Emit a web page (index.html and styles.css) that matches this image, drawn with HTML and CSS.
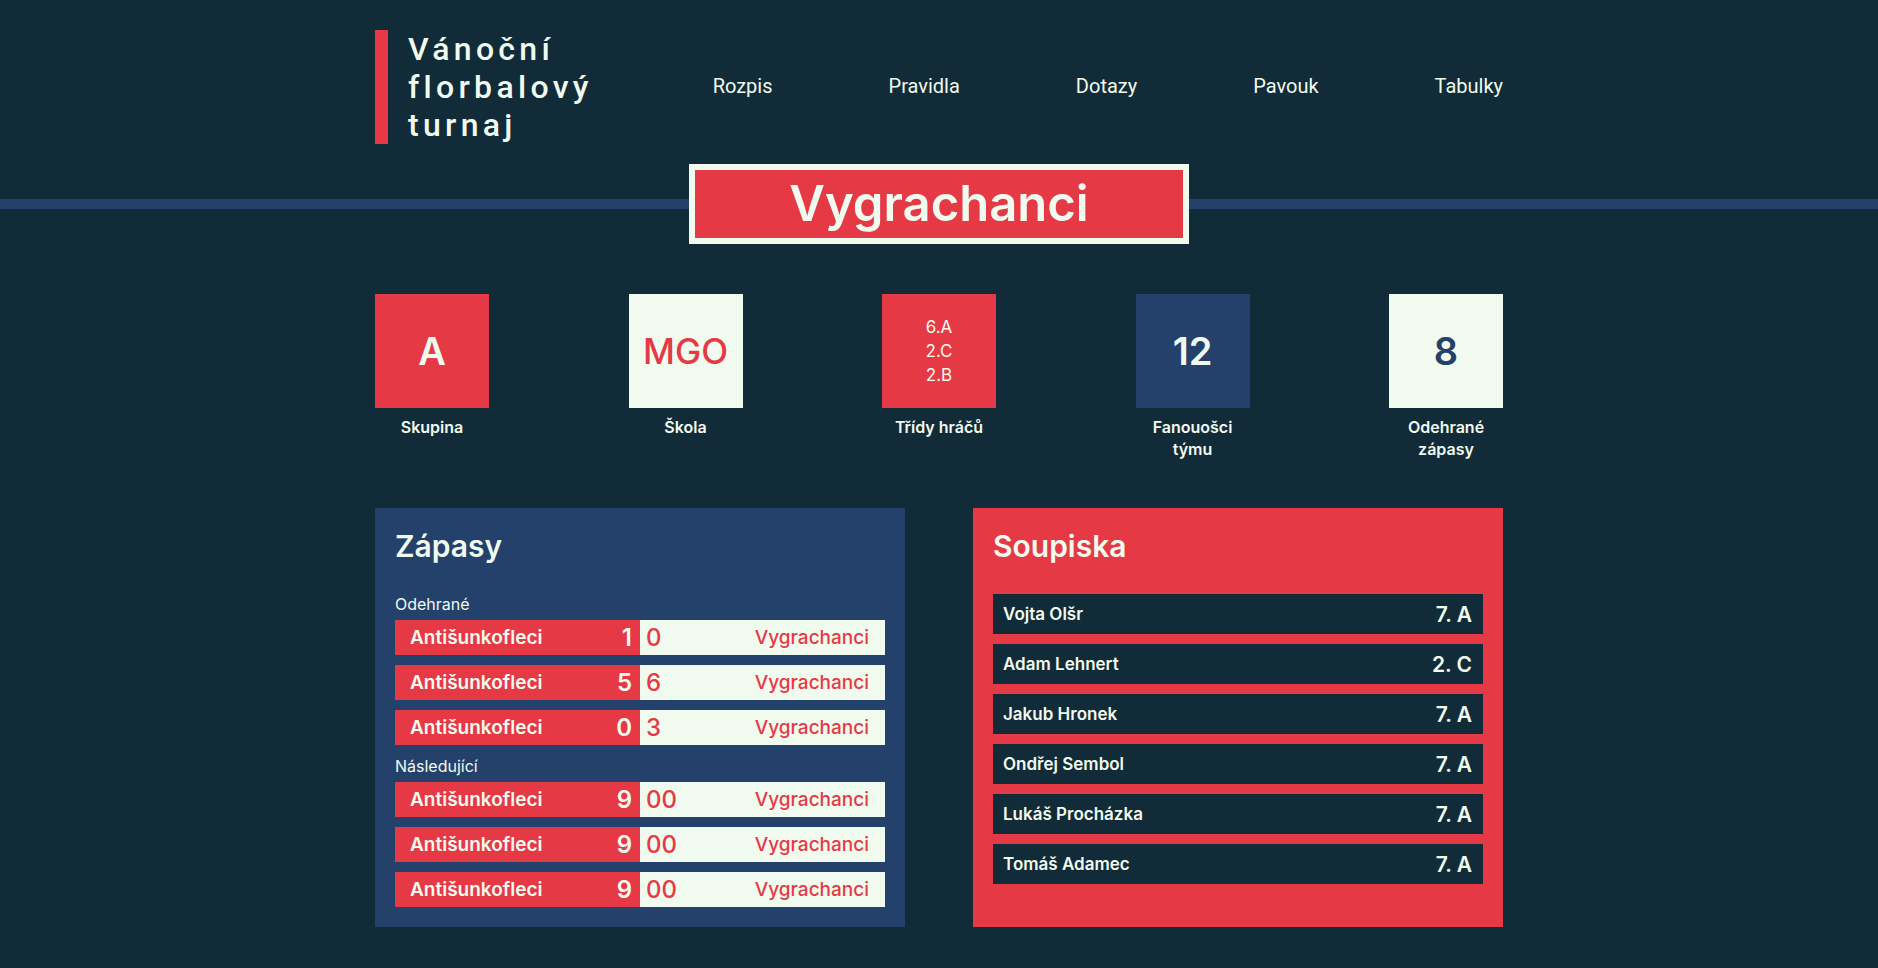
FILE: index.html
```html
<!DOCTYPE html>
<html lang="cs">
<head>
<meta charset="utf-8">
<title>Vygrachanci – Vánoční florbalový turnaj</title>
<link rel="stylesheet" href="styles.css">
</head>
<body>
<header class="header wrap">
  <div class="brand">Vánoční<br>florbalový<br>turnaj</div>
  <nav class="nav">
    <a href="#">Rozpis</a>
    <a href="#">Pravidla</a>
    <a href="#">Dotazy</a>
    <a href="#">Pavouk</a>
    <a href="#">Tabulky</a>
  </nav>
</header>

<section class="banner">
  <h1 class="team-name">Vygrachanci</h1>
</section>

<section class="stats wrap">
  <div class="stat">
    <div class="tile tile-red">A</div>
    <div class="stat-label">Skupina</div>
  </div>
  <div class="stat">
    <div class="tile tile-cream tile-narrow">MGO</div>
    <div class="stat-label">Škola</div>
  </div>
  <div class="stat">
    <div class="tile tile-red tile-small">6.A<br>2.C<br>2.B</div>
    <div class="stat-label">Třídy hráčů</div>
  </div>
  <div class="stat">
    <div class="tile tile-blue">12</div>
    <div class="stat-label">Fanouošci týmu</div>
  </div>
  <div class="stat">
    <div class="tile tile-cream tile-navytext">8</div>
    <div class="stat-label">Odehrané zápasy</div>
  </div>
</section>

<section class="panels wrap">
  <div class="panel panel-blue">
    <h2 class="panel-title">Zápasy</h2>
    <div class="group">
      <div class="group-title">Odehrané</div>
      <div class="matches">
        <div class="match"><div class="side home"><span class="tname">Antišunkofleci</span><span class="score">1</span></div><div class="side away"><span class="score">0</span><span class="tname">Vygrachanci</span></div></div>
        <div class="match"><div class="side home"><span class="tname">Antišunkofleci</span><span class="score">5</span></div><div class="side away"><span class="score">6</span><span class="tname">Vygrachanci</span></div></div>
        <div class="match"><div class="side home"><span class="tname">Antišunkofleci</span><span class="score">0</span></div><div class="side away"><span class="score">3</span><span class="tname">Vygrachanci</span></div></div>
      </div>
    </div>
    <div class="group">
      <div class="group-title">Následující</div>
      <div class="matches">
        <div class="match"><div class="side home"><span class="tname">Antišunkofleci</span><span class="score">9</span></div><div class="side away"><span class="score">00</span><span class="tname">Vygrachanci</span></div></div>
        <div class="match"><div class="side home"><span class="tname">Antišunkofleci</span><span class="score">9</span></div><div class="side away"><span class="score">00</span><span class="tname">Vygrachanci</span></div></div>
        <div class="match"><div class="side home"><span class="tname">Antišunkofleci</span><span class="score">9</span></div><div class="side away"><span class="score">00</span><span class="tname">Vygrachanci</span></div></div>
      </div>
    </div>
  </div>

  <div class="panel panel-red">
    <h2 class="panel-title">Soupiska</h2>
    <ul class="roster">
      <li class="player"><span class="pname">Vojta Olšr</span><span class="pclass">7. A</span></li>
      <li class="player"><span class="pname">Adam Lehnert</span><span class="pclass">2. C</span></li>
      <li class="player"><span class="pname">Jakub Hronek</span><span class="pclass">7. A</span></li>
      <li class="player"><span class="pname">Ondřej Sembol</span><span class="pclass">7. A</span></li>
      <li class="player"><span class="pname">Lukáš Procházka</span><span class="pclass">7. A</span></li>
      <li class="player"><span class="pname">Tomáš Adamec</span><span class="pclass">7. A</span></li>
    </ul>
  </div>
</section>
</body>
</html>
```

FILE: styles.css
```css
* { box-sizing: border-box; }

body {
  margin: 0;
  background: #122b38;
  color: #f1faee;
  font-family: "Inter", "Roboto", "DejaVu Sans", sans-serif;
}

.wrap {
  width: 1128px;
  margin: 0 auto;
}

/* Header */
.header {
  padding-top: 30px;
  display: flex;
  align-items: center;
  justify-content: space-between;
}

.brand {
  border-left: 13px solid #e63946;
  padding-left: 20px;
  font-family: "Roboto", "Inter", sans-serif;
  font-weight: 500;
  font-size: 32px;
  line-height: 38px;
  letter-spacing: 4.3px;
  color: #f1faee;
}

.nav {
  display: flex;
  gap: 116px;
  margin-top: -2px;
}

.nav a {
  font-family: "Roboto", sans-serif;
  font-size: 20px;
  color: #f1faee;
  text-decoration: none;
}

/* Banner */
.banner {
  margin-top: 20px;
  display: flex;
  justify-content: center;
  background: linear-gradient(to bottom,
    transparent 0, transparent 35px,
    #23416b 35px, #23416b 45px,
    transparent 45px);
}

.team-name {
  margin: 0;
  width: 500px;
  height: 80px;
  border: 6px solid #f1faee;
  background: #e63946;
  display: flex;
  align-items: center;
  justify-content: center;
  font-size: 49px;
  font-weight: 600;
  color: #f1faee;
  padding-bottom: 2px;
}

/* Stats */
.stats {
  margin-top: 50px;
  display: flex;
  justify-content: space-between;
}

.stat {
  width: 114px;
  display: flex;
  flex-direction: column;
  align-items: center;
}

.tile {
  width: 114px;
  height: 114px;
  display: flex;
  align-items: center;
  justify-content: center;
  text-align: center;
  font-size: 38px;
  font-weight: 600;
}

.tile-narrow { font-size: 35px; font-weight: 500; }

.tile-red { background: #e63946; color: #f1faee; }
.tile-cream { background: #f1faee; color: #e63946; }
.tile-blue { background: #23416b; color: #f1faee; }
.tile-navytext { color: #23416b; }

.tile-small {
  font-size: 17px;
  line-height: 24px;
  font-weight: 400;
}

.stat-label {
  margin-top: 8px;
  width: 114px;
  text-align: center;
  font-size: 16px;
  line-height: 22px;
  font-weight: 600;
}

/* Panels */
.panels {
  margin-top: 48px;
  display: grid;
  grid-template-columns: 530px 530px;
  justify-content: space-between;
}

.panel {
  padding: 20px;
}

.panel-blue { background: #23416b; }
.panel-red { background: #e63946; }

.panel-title {
  margin: 0 0 30px;
  font-size: 30px;
  line-height: 36px;
  font-weight: 600;
  color: #f1faee;
}

.group + .group {
  margin-top: 11px;
}

.group-title {
  font-size: 16px;
  line-height: 20px;
  margin-bottom: 6px;
}

.matches {
  display: flex;
  flex-direction: column;
  gap: 10px;
}

.match {
  display: grid;
  grid-template-columns: 1fr 1fr;
  height: 35px;
}

.side {
  display: flex;
  align-items: center;
  justify-content: space-between;
}

.home {
  background: #e63946;
  color: #f1faee;
  padding: 0 8px 0 15px;
}

.away {
  background: #f1faee;
  color: #e63946;
  padding: 0 16px 0 6px;
}

.tname {
  font-size: 19px;
}

.home .tname { font-weight: 600; }
.away .tname { font-weight: 500; }

.score {
  font-size: 24px;
  font-weight: 500;
}

.home .score { font-weight: 600; }

/* Roster */
.roster {
  list-style: none;
  margin: 0;
  padding: 0;
  display: flex;
  flex-direction: column;
  gap: 10px;
}

.player {
  height: 40px;
  background: #122b38;
  display: flex;
  align-items: center;
  justify-content: space-between;
  padding: 0 11px 0 10px;
}

.pname {
  font-size: 17px;
  font-weight: 600;
}

.pclass {
  font-size: 21px;
  font-weight: 600;
}
```
